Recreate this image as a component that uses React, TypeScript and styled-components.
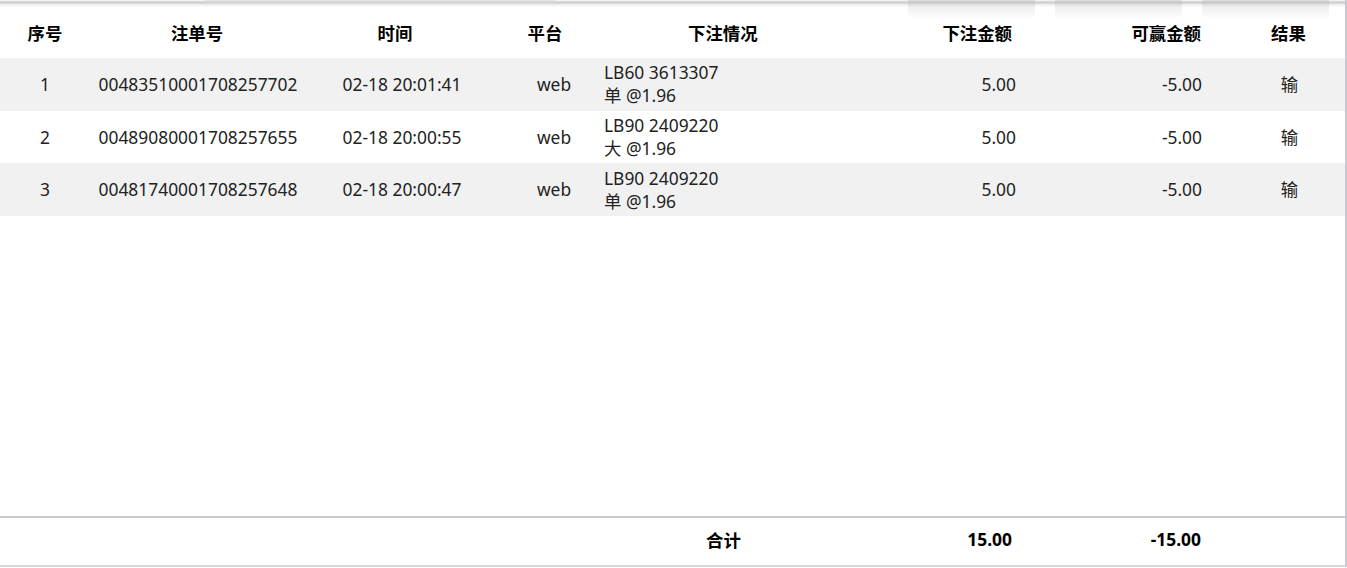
import styled, { createGlobalStyle } from 'styled-components';

const GlobalStyle = createGlobalStyle`
  html, body {
    margin: 0;
    padding: 0;
    background: #ffffff;
  }
  body {
    font-family: "Noto Sans", "Noto Sans CJK SC", sans-serif;
    color: #222;
  }
`;

type Align = 'left' | 'center' | 'right';

interface Column {
  title: string;
  width: number;
  align: Align;
  pad: string;
  headPad?: string;
}

const columns: Column[] = [
  { title: '序号', width: 90, align: 'center', pad: '0' },
  { title: '注单号', width: 210, align: 'center', pad: '0 0 0 6px', headPad: '0 0 0 4px' },
  { title: '时间', width: 190, align: 'center', pad: '0 0 0 14px', headPad: '0' },
  { title: '平台', width: 110, align: 'center', pad: '0 0 0 18px', headPad: '0' },
  { title: '下注情况', width: 250, align: 'left', pad: '0 0 0 4px', headPad: '0 0 0 88px' },
  { title: '下注金额', width: 170, align: 'right', pad: '0 4px 0 0', headPad: '0 8px 0 0' },
  { title: '可赢金额', width: 190, align: 'right', pad: '0 8px 0 0', headPad: '0 9px 0 0' },
  { title: '结果', width: 135, align: 'center', pad: '0 0 0 24px', headPad: '0 0 0 22px' },
];

const bets = [
  { no: 1, id: '00483510001708257702', time: '02-18 20:01:41', platform: 'web', game: 'LB60 3613307', pick: '单 @1.96', amount: '5.00', win: '-5.00', result: '输' },
  { no: 2, id: '00489080001708257655', time: '02-18 20:00:55', platform: 'web', game: 'LB90 2409220', pick: '大 @1.96', amount: '5.00', win: '-5.00', result: '输' },
  { no: 3, id: '00481740001708257648', time: '02-18 20:00:47', platform: 'web', game: 'LB90 2409220', pick: '单 @1.96', amount: '5.00', win: '-5.00', result: '输' },
];

const Page = styled.div`
  position: relative;
  display: flex;
  flex-direction: column;
  width: 1345px;
  height: 565px;
  border-right: 2px solid #c9c9cf;
  border-bottom: 2px solid #d6d6dc;
  overflow: hidden;
`;

const TopEdge = styled.div`
  height: 7px;
  flex-shrink: 0;
  background: linear-gradient(#f4f4f4 0, #f0f0f0 1px, #c6c6c6 2px, #d4d4d4 3px, #f2f2f2 5px, #ffffff 7px);
`;

const Ghosts = styled.div`
  position: absolute;
  top: 0;
  left: 0;
  right: 0;
  height: 18px;
  pointer-events: none;
`;

const GhostButton = styled.div<{ $left: number }>`
  position: absolute;
  top: 0;
  left: ${(p) => p.$left}px;
  width: 127px;
  height: 17px;
  background: linear-gradient(rgba(180, 180, 180, 0.35), rgba(235, 235, 235, 0.15));
`;

const GhostText = styled.div<{ $left: number; $width: number }>`
  position: absolute;
  top: 0;
  left: ${(p) => p.$left}px;
  width: ${(p) => p.$width}px;
  height: 3px;
  background: rgba(215, 215, 215, 0.5);
`;

const Table = styled.table`
  width: 1345px;
  border-collapse: collapse;
  table-layout: fixed;
  font-size: 17.4px;
`;

const HeadCell = styled.th<{ $align: Align; $pad: string }>`
  height: 50px;
  padding: ${(p) => p.$pad};
  padding-bottom: 1px;
  text-align: ${(p) => p.$align};
  font-weight: 700;
  color: #000;
  vertical-align: middle;
`;

const Row = styled.tr<{ $striped: boolean }>`
  background: ${(p) => (p.$striped ? '#f1f1f1' : '#ffffff')};
`;

const Cell = styled.td<{ $align: Align; $pad: string }>`
  height: 52.7px;
  padding: ${(p) => p.$pad};
  text-align: ${(p) => p.$align};
  vertical-align: middle;
  line-height: 23px;
  white-space: nowrap;
`;

const Spacer = styled.div`
  flex: 1;
`;

const Footer = styled.div`
  display: grid;
  grid-template-columns: 600px 250px 170px 190px 135px;
  align-items: center;
  height: 49px;
  padding-bottom: 5px;
  box-sizing: border-box;
  border-top: 2px solid #c9c9cf;
  font-size: 17.4px;
  font-weight: 700;
  color: #000;
`;

const FooterCell = styled.div<{ $align: Align; $pad: string }>`
  text-align: ${(p) => p.$align};
  padding: ${(p) => p.$pad};
`;

export default function App() {
  return (
    <>
      <GlobalStyle />
      <Page>
        <TopEdge />
        <Ghosts>
          <GhostText $left={205} $width={350} />
          <GhostButton $left={908} />
          <GhostButton $left={1055} />
          <GhostButton $left={1202} />
        </Ghosts>
        <Table>
          <colgroup>
            {columns.map((c) => (
              <col key={c.title} style={{ width: c.width }} />
            ))}
          </colgroup>
          <thead>
            <tr>
              {columns.map((c) => (
                <HeadCell key={c.title} $align={c.align} $pad={c.headPad ?? c.pad}>
                  {c.title}
                </HeadCell>
              ))}
            </tr>
          </thead>
          <tbody>
            {bets.map((b, i) => (
              <Row key={b.id} $striped={i % 2 === 0}>
                <Cell $align="center" $pad={columns[0].pad}>{b.no}</Cell>
                <Cell $align="center" $pad={columns[1].pad}>{b.id}</Cell>
                <Cell $align="center" $pad={columns[2].pad}>{b.time}</Cell>
                <Cell $align="center" $pad={columns[3].pad}>{b.platform}</Cell>
                <Cell $align="left" $pad={columns[4].pad}>
                  {b.game}
                  <br />
                  {b.pick}
                </Cell>
                <Cell $align="right" $pad={columns[5].pad}>{b.amount}</Cell>
                <Cell $align="right" $pad={columns[6].pad}>{b.win}</Cell>
                <Cell $align="center" $pad={columns[7].pad}>{b.result}</Cell>
              </Row>
            ))}
          </tbody>
        </Table>
        <Spacer />
        <Footer>
          <div />
          <FooterCell $align="left" $pad="0 0 0 106px">合计</FooterCell>
          <FooterCell $align="right" $pad="0 8px 0 0">15.00</FooterCell>
          <FooterCell $align="right" $pad="0 9px 0 0">-15.00</FooterCell>
          <div />
        </Footer>
      </Page>
    </>
  );
}
